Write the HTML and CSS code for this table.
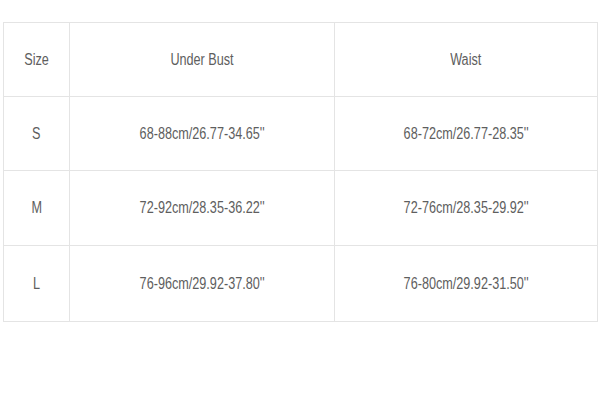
FILE: index.html
```html
<!DOCTYPE html>
<html>
<head>
<meta charset="utf-8">
<link rel="stylesheet" href="styles.css">
</head>
<body>
<div class="wrap">
<table class="size-table">
<colgroup><col class="c1"><col class="c2"><col class="c3"></colgroup>
<tr class="r1"><td><span>Size</span></td><td><span>Under Bust</span></td><td><span>Waist</span></td></tr>
<tr class="r2"><td><span>S</span></td><td><span>68-88cm/26.77-34.65''</span></td><td><span>68-72cm/26.77-28.35''</span></td></tr>
<tr class="r3"><td><span>M</span></td><td><span>72-92cm/28.35-36.22''</span></td><td><span>72-76cm/28.35-29.92''</span></td></tr>
<tr class="r4"><td><span>L</span></td><td><span>76-96cm/29.92-37.80''</span></td><td><span>76-80cm/29.92-31.50''</span></td></tr>
</table>
</div>
</body>
</html>
```
FILE: styles.css
```css
html, body { margin: 0; padding: 0; background: #fff; }
.wrap { padding: 22px 3px 0 3px; }
.size-table {
  width: 594px;
  border-collapse: collapse;
  table-layout: fixed;
  font-family: "Liberation Sans", Arial, sans-serif;
  font-size: 16px;
  color: #5e5e5e;
}
.c1 { width: 66px; }
.c2 { width: 265px; }
.c3 { width: 263px; }
.size-table td {
  border: 1px solid #e4e4e4;
  height: 73px;
  padding: 0;
  text-align: center;
  vertical-align: middle;
}
.size-table .r3 td { height: 74px; }
.size-table .r4 td { height: 75px; }
.size-table span {
  display: inline-block;
  transform: scaleX(0.79);
  white-space: nowrap;
}
```
